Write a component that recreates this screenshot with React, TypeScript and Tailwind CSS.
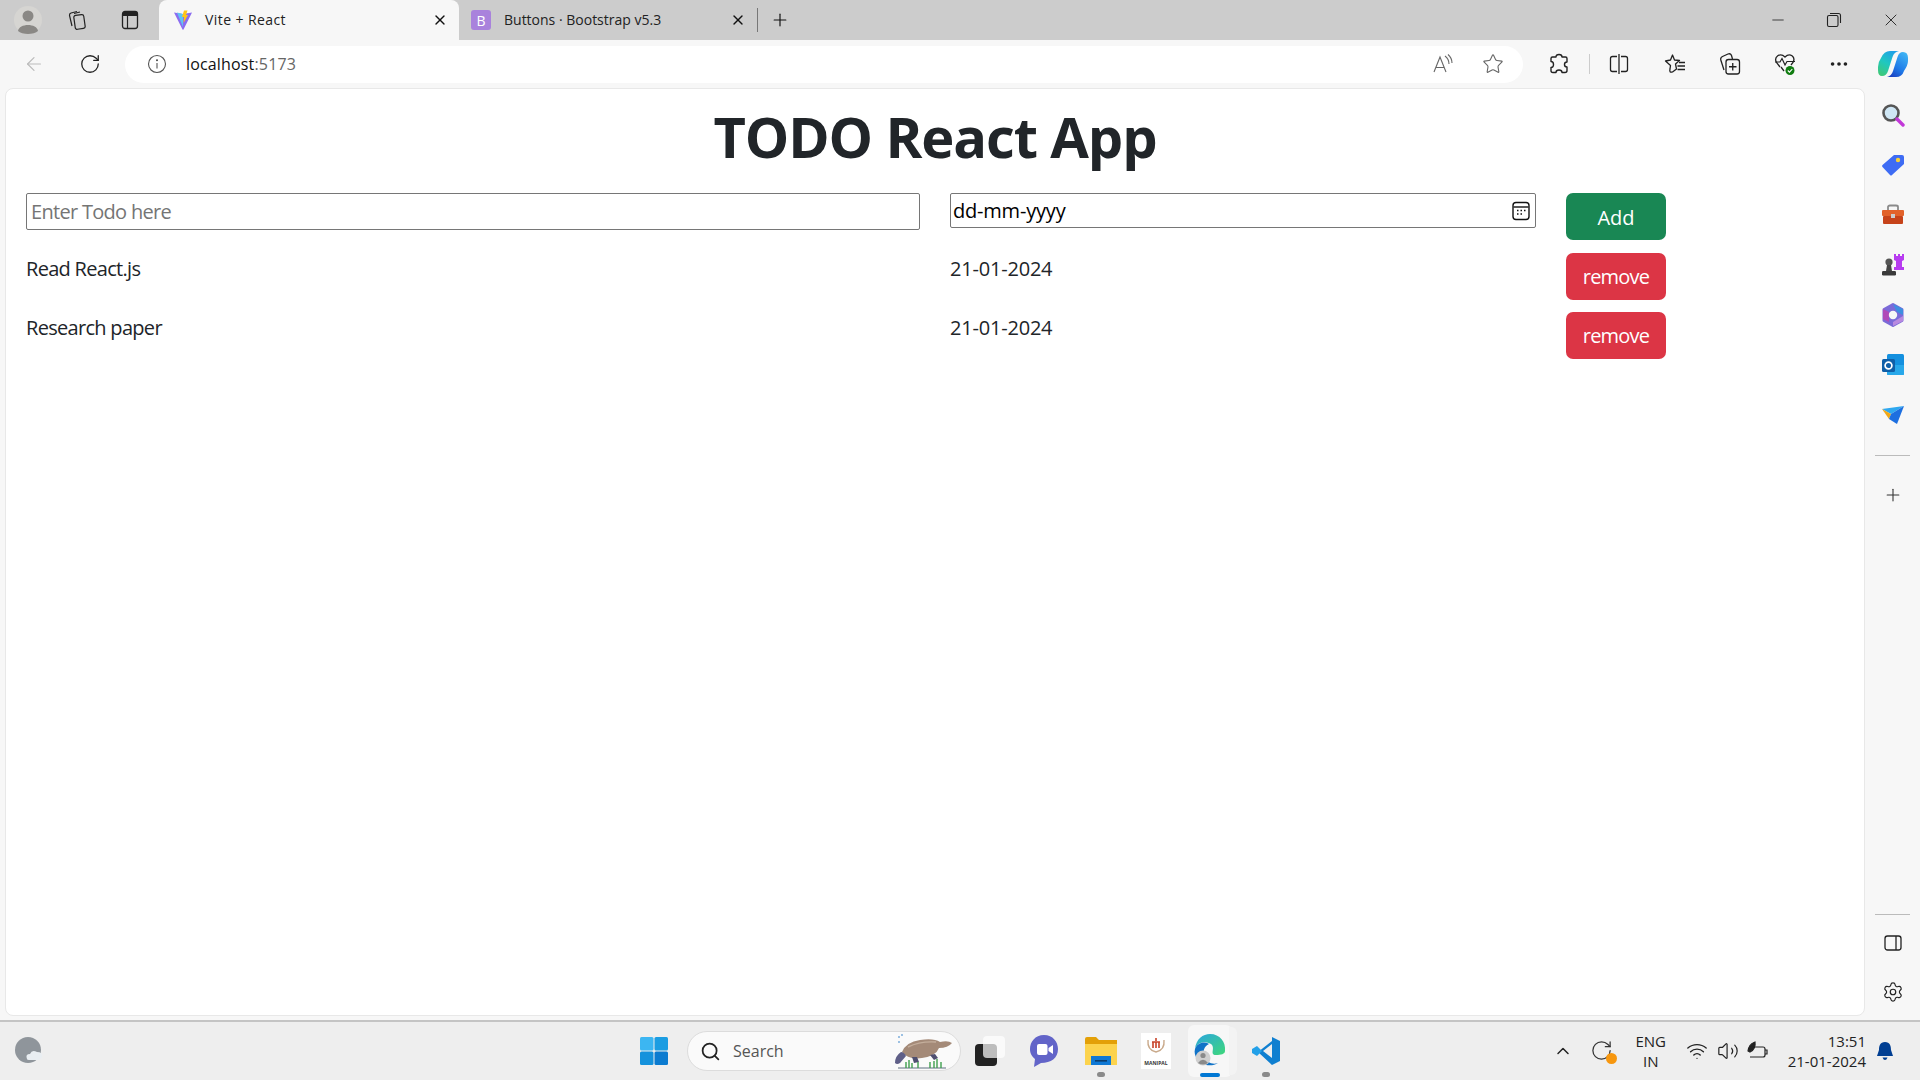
import { ArrowLeft, ChevronUp, Minus, MoreHorizontal, Plus, RotateCw, Search, Settings, Star, Volume2, Wifi, X } from "lucide-react";

const stack = "font-['Open_Sans','Noto_Sans',sans-serif]";

function ViteLogo() {
  return (
    <svg width="20" height="20" viewBox="0 0 20 20">
      <path d="M1 2.5 L10 4 L19 2.5 L10.5 19.5 Q10 20 9.5 19.5 Z" fill="#8b6cf0" />
      <path d="M4 2.5 L10 4 L10 17 Z" fill="#5fc4f5" />
      <path d="M11 0.5 L14.5 0.5 L13 5 L15 5 L10.5 13 L11 7 L9 7 Z" fill="#ffc517" />
    </svg>
  );
}

function Profile() {
  return (
    <svg width="28" height="30" viewBox="0 0 28 30">
      <circle cx="14" cy="15" r="14" fill="#d6d5d2" />
      <circle cx="14" cy="11" r="5.5" fill="#8a8885" />
      <path d="M4 26 C5 18 23 18 24 26 C20 30 8 30 4 26 Z" fill="#8a8885" />
    </svg>
  );
}

function CollectionsTab() {
  return (
    <svg width="20" height="20" viewBox="0 0 20 20" fill="none" stroke="#222" strokeWidth="1.2">
      <rect x="7.5" y="5" width="10" height="14" rx="2" transform="rotate(-8 12 12)" />
      <path d="M5 16 L2.5 5.5 Q2.3 3.5 4 3 L10 1.5" />
      <path d="M7 3.5 L13 2" />
    </svg>
  );
}

function VerticalTabs() {
  return (
    <svg width="20" height="20" viewBox="0 0 20 20">
      <rect x="2.5" y="1.5" width="15" height="17" rx="2.5" fill="none" stroke="#222" strokeWidth="1.3" />
      <path d="M2.5 4 Q2.5 1.5 5 1.5 H15 Q17.5 1.5 17.5 4 V6 H2.5 Z" fill="#222" />
      <path d="M7.5 6 V18" stroke="#222" strokeWidth="1.2" />
    </svg>
  );
}

function InfoIcon() {
  return (
    <svg width="20" height="20" viewBox="0 0 20 20" fill="none" stroke="#555" strokeWidth="1.1">
      <circle cx="10" cy="10" r="8.5" />
      <path d="M10 9 V14.5" />
      <circle cx="10" cy="6.2" r="0.5" fill="#555" />
    </svg>
  );
}

function ReadAloud() {
  return (
    <svg width="22" height="22" viewBox="0 0 22 22" fill="none" stroke="#666" strokeWidth="1.1">
      <path d="M2 19 L8 4 L14 19 M4 14.5 H12" />
      <path d="M13 3 Q17 6 17 11 M16 1.5 Q20 5 20 10" />
    </svg>
  );
}

function ExtensionIcon() {
  return (
    <svg width="20" height="22" viewBox="0 0 20 22" fill="none" stroke="#222" strokeWidth="1.4" strokeLinejoin="round">
      <path d="M7 4 Q7 1.5 10 1.5 Q13 1.5 13 4 H16.5 Q18 4 18 5.5 V9 Q15.5 9 15.5 11.5 Q15.5 14 18 14 V17.5 Q18 19.5 16 19.5 H13 Q13 17 10 17 Q7 17 7 19.5 H4 Q2 19.5 2 17.5 V14.5 Q4.5 14.5 4.5 11.5 Q4.5 8.5 2 8.5 V5.5 Q2 4 3.5 4 Z" />
    </svg>
  );
}

function SplitIcon() {
  return (
    <svg width="20" height="22" viewBox="0 0 20 22" fill="none" stroke="#222" strokeWidth="1.3">
      <path d="M8 3.5 H3.5 Q1.5 3.5 1.5 5.5 V16.5 Q1.5 18.5 3.5 18.5 H8 M12 3.5 H16.5 Q18.5 3.5 18.5 5.5 V16.5 Q18.5 18.5 16.5 18.5 H12" />
      <path d="M10 1 V21" />
    </svg>
  );
}

function FavoritesIcon() {
  return (
    <svg width="22" height="22" viewBox="0 0 22 22" fill="none" stroke="#222" strokeWidth="1.3" strokeLinejoin="round">
      <path d="M8.5 2 L10.5 7 L15.5 7.5 L11.5 11 L12.5 16 L8.5 19 Q5 20 6 16 L6.5 12.5 L1.5 8 L6.5 7 Z" />
      <path d="M15 9.5 H21 M13.5 13 H21 M13.5 16.5 H21" />
    </svg>
  );
}

function CollectionsIcon() {
  return (
    <svg width="22" height="24" viewBox="0 0 22 24" fill="none" stroke="#222" strokeWidth="1.3">
      <rect x="7" y="7.5" width="13.5" height="14.5" rx="2.5" />
      <path d="M13.75 11 V18.5 M10 14.75 H17.5" />
      <path d="M5 18 L1.8 8 Q1.2 5.5 3.5 4.5 L9 2 Q11.5 1 12.5 3.5 L13.5 7" />
    </svg>
  );
}

function HealthIcon() {
  return (
    <svg width="22" height="24" viewBox="0 0 22 24" fill="none">
      <path d="M6 15 L2.5 10.5 C-0.5 5 6 0 11 5 C16 0 22 5 19 10.5 L17 13" stroke="#222" strokeWidth="1.3" />
      <path d="M1 10 H6 L8 6.5 L11 13 L13 9.5 H21" stroke="#222" strokeWidth="1.2" />
      <path d="M7 15 L10 19" stroke="#222" strokeWidth="1.3" />
      <circle cx="16" cy="18.5" r="4.5" fill="#107c10" />
      <path d="M13.8 18.5 L15.5 20.2 L18.3 17" stroke="white" strokeWidth="1.1" />
    </svg>
  );
}

function CopilotLogo() {
  return (
    <svg width="32" height="32" viewBox="0 0 32 32">
      <defs>
        <linearGradient id="cpA" x1="0.7" y1="0" x2="0.2" y2="1">
          <stop offset="0" stopColor="#1f9fe8" />
          <stop offset="0.5" stopColor="#1fc8c0" />
          <stop offset="1" stopColor="#3fc878" />
        </linearGradient>
        <linearGradient id="cpB" x1="0.8" y1="0" x2="0.2" y2="1">
          <stop offset="0" stopColor="#3fb4f4" />
          <stop offset="0.6" stopColor="#1f7ae8" />
          <stop offset="1" stopColor="#1a3fc0" />
        </linearGradient>
      </defs>
      <path d="M13 3 H22 Q17 4 15.5 9 L11 23 Q9.5 28 5 28 Q1 28 1 22 V19 Q1 14 4 10 Q7 3 13 3 Z" fill="url(#cpA)" />
      <path d="M10 29 H19 Q25 29 27 23 Q31 17 31 13 V10 Q31 4 26 4 Q22 4 20.5 9 L16 23 Q14.5 28 10 29 Z" fill="url(#cpB)" />
    </svg>
  );
}

function CalendarIcon() {
  return (
    <svg width="18" height="20" viewBox="0 0 18 20" fill="none">
      <rect x="1" y="1.5" width="16" height="17" rx="3" stroke="#111" strokeWidth="1.4" />
      <path d="M1.5 6 H16.5" stroke="#111" strokeWidth="1.4" />
      <path d="M5 9.5 H6.5 M8.5 9.5 H10 M12 9.5 H13.5 M5 13 H6.5 M8.5 13 H10" stroke="#111" strokeWidth="1.6" />
    </svg>
  );
}

function SidebarIcon({ name }: { name: string }) {
  if (name === "search")
    return (
      <svg width="24" height="24" viewBox="0 0 24 24">
        <circle cx="10" cy="10" r="7.5" fill="#cfe6f4" stroke="#555" strokeWidth="2.6" />
        <path d="M16 16 L22 22" stroke="#c238d8" strokeWidth="3.4" strokeLinecap="round" />
      </svg>
    );
  if (name === "tag")
    return (
      <svg width="24" height="24" viewBox="0 0 24 24">
        <path d="M13 2 H21 Q23 2 23 4 V11 L11 22 Q10 23 9 22 L1.5 14 Q0.5 13 1.5 12 Z" fill="#3e6cf4" />
        <circle cx="17" cy="7" r="2.2" fill="#f7d13a" />
      </svg>
    );
  if (name === "tools")
    return (
      <svg width="24" height="22" viewBox="0 0 24 22">
        <path d="M7 6 V3 Q7 1.5 9 1.5 H15 Q17 1.5 17 3 V6" fill="none" stroke="#8a8a8a" strokeWidth="1.8" />
        <rect x="1" y="6" width="22" height="6" rx="1" fill="#e2622a" />
        <rect x="2" y="12" width="20" height="8" rx="1" fill="#c6431a" />
        <rect x="10" y="10" width="4" height="4" fill="#ccc" />
      </svg>
    );
  if (name === "chess")
    return (
      <svg width="24" height="24" viewBox="0 0 24 24">
        <path d="M13 1 H15 V3 H17 V1 H19 V3 H21 V1 H23 V7 L21 8 V14 H23 V17 H13 V14 H15 V8 L13 7 Z" fill="#b73cf0" />
        <circle cx="8" cy="9" r="3.6" fill="#555" />
        <path d="M6 12 H10 L11 18 H5 Z" fill="#444" />
        <rect x="1" y="18" width="14" height="4.5" rx="1.2" fill="#3a3a3a" />
      </svg>
    );
  if (name === "m365")
    return (
      <svg width="24" height="26" viewBox="0 0 24 26" strokeLinejoin="round">
        <path d="M12 2.5 L21 7.5 V18.5 L12 23.5 L3 18.5 V7.5 Z" fill="#7b6ad8" stroke="#7b6ad8" strokeWidth="3" />
        <path d="M12 2 L22 7 V13 L16 10 Z" fill="#3e8ee0" />
        <path d="M2 7 L8 10 V20 L2 17 Z" fill="#b04ab8" />
        <path d="M12 24 L22 19 V14 L12 20 Z" fill="#b98ae0" />
        <circle cx="12" cy="13" r="4.2" fill="#f7f7f7" />
      </svg>
    );
  if (name === "outlook")
    return (
      <svg width="24" height="24" viewBox="0 0 24 24">
        <rect x="6" y="1" width="17" height="21" rx="1.5" fill="#1490df" />
        <path d="M6 12 L23 12 V21 Q23 22 22 22 H7 Q6 22 6 21 Z" fill="#28a8ea" />
        <rect x="1" y="6" width="13" height="13" rx="1.5" fill="#0f5fa8" />
        <circle cx="7.5" cy="12.5" r="3.4" fill="none" stroke="white" strokeWidth="1.7" />
      </svg>
    );
  return (
    <svg width="24" height="20" viewBox="0 0 24 20">
      <path d="M1 4 L23 1 L10 9 Z" fill="#2ea8f0" />
      <path d="M1 4 L10 9 L8 14 Z" fill="#f0a818" />
      <path d="M23 1 L16 19 L8 14 L10 9 Z" fill="#1d6fe0" />
    </svg>
  );
}

function EdgeLogo() {
  return (
    <svg width="32" height="34" viewBox="0 0 32 34">
      <defs>
        <linearGradient id="edgeA" x1="0" y1="0" x2="1" y2="1">
          <stop offset="0" stopColor="#2aa5e0" />
          <stop offset="1" stopColor="#3fd87a" />
        </linearGradient>
      </defs>
      <path d="M1 15 C2 5 9 0 16 0 C26 0 32 8 31 17 C31 20 27 21 22 21 C15 21 22 14 17 10 C10 6 3 9 1 15 Z" fill="url(#edgeA)" />
      <path d="M1 15 C3 9 10 7 15 10 C10 12 8 18 11 24 C13 28 18 31 24 29 C18 33 8 32 3 25 C1 22 0 18 1 15 Z" fill="#1173c7" />
      <circle cx="9" cy="24" r="7.5" fill="#cfcfcf" />
      <circle cx="9" cy="21.5" r="2.6" fill="#8a8a8a" />
      <path d="M4 29 Q9 22.5 14 29 Q9 32 4 29 Z" fill="#8a8a8a" />
    </svg>
  );
}

function Platypus() {
  return (
    <svg width="58" height="38" viewBox="0 0 58 38">
      <path d="M8 20 Q12 10 26 8 Q40 6 46 10 Q54 8 58 11 Q54 16 45 16 Q42 24 28 26 Q14 28 8 20 Z" fill="#a48a78" />
      <path d="M14 15 Q26 9 42 10" stroke="#c4ae9c" strokeWidth="1.4" fill="none" />
      <path d="M1 31 Q1 24 7 20 Q10 20 12 24 L6 31 Q3 33 1 31 Z" fill="#5f5f88" />
      <path d="M18 25 L20 31 L25 30 L23 25 Z M36 23 L40 28 L44 26 L41 22 Z" fill="#4f4f70" />
      <path d="M4 36 H52" stroke="#5f6f80" strokeWidth="1.2" />
      <path d="M12 36 V30 M15 36 V28 M18 36 V31 M24 36 V30 M36 36 V30 M40 36 V29 M43 36 V27 M47 36 V30" stroke="#3f9f4f" strokeWidth="1.4" />
      <path d="M5 4 V6 M8 2 V4 M5 9 V11" stroke="#6aa3d8" strokeWidth="1.3" />
    </svg>
  );
}

function Taskbar() {
  return (
    <footer className="flex h-[60px] shrink-0 items-center border-t-2 border-[#c4c4c4] bg-[#eeeeee]">
      <div className="w-[640px] pl-[14px]">
        <svg width="30" height="30" viewBox="0 0 30 30">
          <circle cx="14" cy="14" r="13" fill="#8f959b" />
          <path d="M13 23 Q11 18 16 18 Q18 13 23 16 Q29 16 28 21 Q27 24 24 24 H15 Q13 24 13 23 Z" fill="#e9eef2" />
        </svg>
      </div>
      <div className="flex items-center">
        <svg width="28" height="30" viewBox="0 0 28 30">
          <rect x="0" y="1" width="13.5" height="13.5" rx="1.5" fill="#3cb6f2" />
          <rect x="14.5" y="1" width="13.5" height="13.5" rx="1.5" fill="#1b9de2" />
          <rect x="0" y="15.5" width="13.5" height="13.5" rx="1.5" fill="#1592dc" />
          <rect x="14.5" y="15.5" width="13.5" height="13.5" rx="1.5" fill="#0b7bd0" />
        </svg>
        <div className="ml-[19px] flex h-[40px] w-[274px] items-center justify-between rounded-full border border-[#dcdcdc] bg-[#fafafa] pl-[12px] pr-[8px]">
          <div className="flex items-center gap-[12px]">
            <Search size={21} color="#222" strokeWidth={2} />
            <span className="text-[16px] text-[#555]">Search</span>
          </div>
          <Platypus />
        </div>
        <div className="relative ml-[14px] h-[30px] w-[30px]">
          <div className="absolute bottom-0 left-0 h-[22px] w-[22px] rounded-sm bg-[#222]" />
          <div className="absolute right-0 top-0 h-[22px] w-[22px] rounded-sm bg-white/70" />
        </div>
        <div className="ml-[21px] flex w-[36px] justify-center">
          <svg width="30" height="34" viewBox="0 0 30 34">
            <path d="M15 1 C24 1 29 8 29 15 C29 24 22 29 12 29 L5 33 L6 25 C2 22 1 18 1 15 C1 8 6 1 15 1 Z" fill="#6264c8" />
            <rect x="8" y="10" width="10.5" height="11" rx="2" fill="white" />
            <path d="M19.5 14 L24 11 V20 L19.5 17 Z" fill="white" />
          </svg>
        </div>
        <div className="relative ml-[21px] flex w-[36px] justify-center">
          <svg width="34" height="30" viewBox="0 0 34 30">
            <path d="M1 3 Q1 1 3 1 H12 L15 4 H33 V12 H1 Z" fill="#e3a008" />
            <path d="M1 8 H33 V29 H1 Z" fill="#fcd34d" />
            <rect x="7" y="20" width="20" height="9" fill="#0f78d4" />
            <rect x="11" y="24" width="12" height="1.6" fill="#0a3d6e" />
          </svg>
          <div className="absolute bottom-[-11px] left-[14px] h-[5px] w-[8px] rounded-full bg-[#8a8a8a]" />
        </div>
        <div className="ml-[22px] flex h-[36px] w-[30px] flex-col items-center justify-center bg-white">
          <svg width="22" height="24" viewBox="0 0 22 24" fill="none">
            <path d="M3 4 Q2 14 11 16 Q20 14 19 4" stroke="#c9a98a" strokeWidth="1.4" />
            <path d="M11 2 V5 M7 6 H15 M8 6 V12 M11 6 V12 M14 6 V12" stroke="#c8442a" strokeWidth="1.6" />
          </svg>
          <span className="text-[5px] font-bold leading-[6px] text-[#333]">MANIPAL</span>
        </div>
        <div className="relative ml-[17px] flex h-[52px] w-[44px] items-center justify-center rounded-md bg-[#f7f7f7]">
          <div className="absolute -right-[5px] top-[2px] h-[48px] w-[8px] rounded-r-md bg-[#f3f3f3]" />
          <div className="relative">
            <EdgeLogo />
          </div>
          <div className="absolute bottom-0 left-[12px] h-[4px] w-[20px] rounded-full bg-[#0078d4]" />
        </div>
        <div className="relative ml-[17px] flex w-[34px] justify-center">
          <svg width="30" height="30" viewBox="0 0 30 30">
            <path d="M21 1 L29 5 V25 L21 29 L7 16 L21 5 Z" fill="#0f7fd0" />
            <path d="M21 8 V22 L12 15 Z" fill="#eeeeee" />
            <path d="M6 10 L1 13 V17 L6 20 L11 15 Z" fill="#23a0e8" />
          </svg>
          <div className="absolute bottom-[-11px] left-[13px] h-[5px] w-[8px] rounded-full bg-[#8a8a8a]" />
        </div>
      </div>
      <div className="ml-auto flex items-center pr-[26px]">
        <ChevronUp size={20} color="#222" strokeWidth={1.8} />
        <div className="relative ml-[17px] h-[24px] w-[24px]">
          <RotateCw size={23} color="#333" strokeWidth={1.3} />
          <div className="absolute bottom-[-1px] right-[-3px] h-[11px] w-[11px] rounded-full bg-[#f7970f]" />
        </div>
        <div className="ml-[15px] w-[44px] text-center text-[15px] leading-[20px] text-[#222]">
          <div>ENG</div>
          <div>IN</div>
        </div>
        <div className="ml-[13px] flex items-center gap-[7px]">
          <Wifi className="mr-[2px]" size={22} color="#222" strokeWidth={1.5} />
          <Volume2 size={22} color="#222" strokeWidth={1.3} />
          <svg width="22" height="20" viewBox="0 0 22 20" fill="none" stroke="#222" strokeWidth="1.2">
            <path d="M6 6 H17 Q19 6 19 8 V14 Q19 16 17 16 H4" />
            <path d="M19 9 H21 V13 H19" />
            <path d="M2 10 Q3 3 9 1 Q10 8 4 11 Z" fill="#222" />
          </svg>
        </div>
        <div className="ml-[20px] text-right text-[15px] leading-[20px] text-[#222]">
          <div>13:51</div>
          <div>21-01-2024</div>
        </div>
        <svg className="ml-[10px]" width="18" height="20" viewBox="0 0 18 20">
          <path d="M9 1 C14 1 15 5 15 9 L17 15 H1 L3 9 C3 5 4 1 9 1 Z" fill="#003e92" />
          <path d="M6.5 16.5 H11.5 Q10.5 19 9 19 Q7.5 19 6.5 16.5 Z" fill="#003e92" />
        </svg>
      </div>
    </footer>
  );
}

function TodoRow({ name, date }: { name: string; date: string }) {
  return (
    <div className="mt-[12px] flex items-start first:mt-0">
      <div className="w-[924px] pt-[1px] text-[20px] leading-[30px] tracking-[-0.035em] text-[#212529]">{name}</div>
      <div className="w-[616px] pt-[1px] text-[20px] leading-[30px] tracking-[-0.01em] text-[#212529]">{date}</div>
      <button className="h-[47px] w-[100px] rounded-[7px] bg-[#dc3545] pt-px text-[20px] tracking-[-0.04em] text-white">remove</button>
    </div>
  );
}

export default function App() {
  return (
    <div className={`flex h-[1080px] w-[1920px] flex-col overflow-hidden bg-[#f7f7f7] ${stack}`}>
      <div className="flex h-10 shrink-0 items-center bg-[#cccccc]">
        <div className="flex w-[159px] items-center pl-[14px]">
          <Profile />
          <div className="ml-[25px]">
            <CollectionsTab />
          </div>
          <div className="ml-[33px]">
            <VerticalTabs />
          </div>
        </div>
        <div className="flex h-10 w-[300px] items-center rounded-t-lg bg-[#f7f7f7] pl-[14px] pr-[11px]">
          <ViteLogo />
          <span className="ml-[12px] flex-1 pb-[2px] text-[14px] tracking-[0.03em] text-[#222]">Vite + React</span>
          <X size={16} color="#111" />
        </div>
        <div className="flex h-10 w-[298px] items-center pl-[12px] pr-[11px]">
          <div className="flex h-[20px] w-[20px] items-center justify-center rounded-[3px] bg-[#a982dc] text-[14px] text-white">B</div>
          <span className="ml-[13px] flex-1 pb-[2px] text-[14px] text-[#222]">Buttons · Bootstrap v5.3</span>
          <X size={16} color="#111" />
        </div>
        <div className="h-[24px] w-px bg-[#777]" />
        <Plus className="ml-[12px]" size={20} color="#111" strokeWidth={1.4} />
        <div className="ml-auto flex items-center gap-[39px] pr-[19px]">
          <Minus size={18} color="#222" strokeWidth={1.1} />
          <svg width="16" height="16" viewBox="0 0 16 16" fill="none" stroke="#222" strokeWidth="1.1">
            <rect x="1.5" y="3.5" width="10.5" height="11" rx="1.5" />
            <path d="M4 1.5 H12.5 Q14.5 1.5 14.5 3.5 V11" />
          </svg>
          <X size={20} color="#222" strokeWidth={1.1} />
        </div>
      </div>

      <div className="flex h-12 shrink-0 items-center">
        <ArrowLeft className="ml-[23px]" size={22} color="#bbb" strokeWidth={1.3} />
        <RotateCw className="ml-[34px]" size={22} color="#222" strokeWidth={1.4} />
        <div className="ml-[24px] flex h-[37px] w-[1398px] items-center rounded-full bg-white pl-[22px] pr-[19px]">
          <InfoIcon />
          <span className="ml-[19px] flex-1 text-[16px] tracking-[0.01em] text-[#111]">
            localhost<span className="text-[#666]">:5173</span>
          </span>
          <ReadAloud />
          <Star className="ml-[28px]" size={22} color="#666" strokeWidth={1.2} />
        </div>
        <div className="ml-[26px]">
          <ExtensionIcon />
        </div>
        <div className="ml-[20px] h-[20px] w-px bg-[#ccc]" />
        <div className="ml-[19px]">
          <SplitIcon />
        </div>
        <div className="ml-[35px]">
          <FavoritesIcon />
        </div>
        <div className="ml-[33px]">
          <CollectionsIcon />
        </div>
        <div className="ml-[33px]">
          <HealthIcon />
        </div>
        <MoreHorizontal className="ml-[32px]" size={22} color="#222" />
        <div className="ml-[27px]">
          <CopilotLogo />
        </div>
      </div>

      <div className="flex min-h-0 flex-1">
        <main className="mb-[4px] ml-[5px] w-[1860px] rounded-lg border border-[#e8e8e8] bg-white pl-[20px] pt-[14px]">
          <h1 className="w-[1818px] text-center text-[56px] font-bold leading-[67px] tracking-[-0.02em] text-[#212529]">TODO React App</h1>
          <div className="mt-[23px] flex items-start">
            <div className="w-[924px]">
              <input
                className="h-[37px] w-[894px] rounded-[2px] border border-[#767676] bg-white px-[4px] text-[20px] tracking-[-0.035em] placeholder:text-[#757575]"
                placeholder="Enter Todo here"
              />
            </div>
            <div className="w-[616px]">
              <div className="flex h-[35px] w-[586px] items-center justify-between rounded-[2px] border border-[#767676] pl-[2px] pr-[5px] text-[20px] tracking-[-0.01em] text-black">
                <span>dd-mm-yyyy</span>
                <CalendarIcon />
              </div>
            </div>
            <button className="h-[47px] w-[100px] rounded-[7px] bg-[#198754] pt-[2px] text-[20px] text-white">Add</button>
          </div>
          <div className="mt-[13px]">
            <TodoRow name="Read React.js" date="21-01-2024" />
            <TodoRow name="Research paper" date="21-01-2024" />
          </div>
        </main>
        <aside className="flex flex-1 flex-col items-center pb-[17px] pt-[2px]">
          <div className="flex flex-col items-center">
            {["search", "tag", "tools", "chess", "m365", "outlook", "send"].map((name) => (
              <div key={name} className="flex h-[50px] items-center">
                <SidebarIcon name={name} />
              </div>
            ))}
          </div>
          <div className="mt-[15px] h-px w-[35px] bg-[#bbb]" />
          <Plus className="mt-[29px]" size={20} color="#333" strokeWidth={1.3} />
          <div className="mt-auto h-px w-[35px] bg-[#bbb]" />
          <svg className="mt-[18px]" width="20" height="20" viewBox="0 0 20 20" fill="none" stroke="#222" strokeWidth="1.3">
            <rect x="2" y="3" width="16" height="14" rx="2.5" />
            <path d="M13 3 V17" />
          </svg>
          <Settings className="mt-[28px]" size={22} color="#222" strokeWidth={1.3} />
        </aside>
      </div>

      <Taskbar />
    </div>
  );
}
